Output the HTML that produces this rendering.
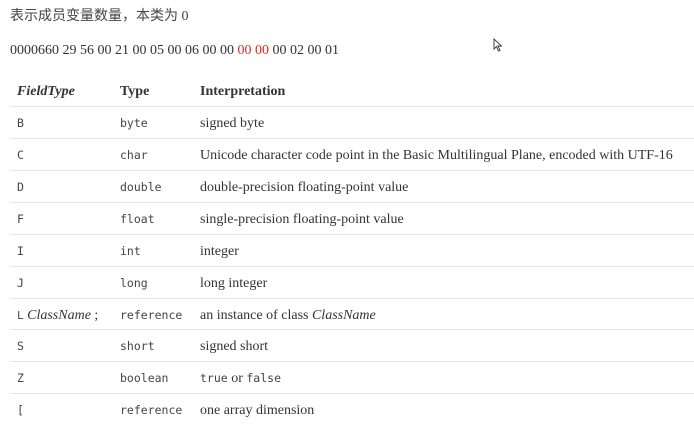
<!DOCTYPE html>
<html><head><meta charset="utf-8"><style>
body{margin:0;width:694px;height:432px;background:#fff;color:#333;font-family:"Liberation Serif","Noto Serif CJK SC",serif;position:relative;overflow:hidden}
.t{position:absolute;left:10px;top:5px;font-size:14px;font-family:"Liberation Serif","Noto Sans CJK SC",sans-serif;color:#444}
.h{position:absolute;left:10px;top:43px;font-size:14px;color:#333}
.r{color:#e0271e}
.row{position:absolute;left:10px;width:684px;height:32px;border-top:1px solid #e6e6e6;font-size:14px}
.row span{position:absolute;top:9px}
.c1{left:7px}.c2{left:110px}.c3{left:190px}
.m{font-family:"DejaVu Sans Mono","Liberation Mono",monospace;font-size:11.5px;color:#444;top:9px!important}
.hd{position:absolute;left:10px;top:84px;font-size:14px;font-weight:bold;width:684px}
.hd span{position:absolute}
</style></head><body>
<div class="t">表示成员变量数量，本类为 0</div>
<div class="h">0000660 29 56 00 21 00 05 00 06 00 00 <span class="r">00 00</span> 00 02 00 01</div>
<svg style="position:absolute;left:493px;top:38px" width="10" height="14" viewBox="0 0 10 14"><path d="M1 1 L1 11 L3.5 8.5 L5.5 13 L7 12.3 L5 8 L8.5 8 Z" fill="#fff" stroke="#333" stroke-width="0.9"/></svg>
<div class="hd"><span style="left:7px;font-style:italic">FieldType</span><span style="left:110px">Type</span><span style="left:190px">Interpretation</span></div>
<div class="row" style="top:106px"><span class="c1 m">B</span><span class="c2 m">byte</span><span class="c3">signed byte</span></div>
<div class="row" style="top:138px"><span class="c1 m">C</span><span class="c2 m">char</span><span class="c3">Unicode character code point in the Basic Multilingual Plane, encoded with UTF-16</span></div>
<div class="row" style="top:170px"><span class="c1 m">D</span><span class="c2 m">double</span><span class="c3">double-precision floating-point value</span></div>
<div class="row" style="top:202px"><span class="c1 m">F</span><span class="c2 m">float</span><span class="c3">single-precision floating-point value</span></div>
<div class="row" style="top:234px"><span class="c1 m">I</span><span class="c2 m">int</span><span class="c3">integer</span></div>
<div class="row" style="top:266px"><span class="c1 m">J</span><span class="c2 m">long</span><span class="c3">long integer</span></div>
<div class="row" style="top:298px"><span class="c1"><span class="m" style="position:static;font-size:11px">L</span> <i>ClassName</i> ;</span><span class="c2 m">reference</span><span class="c3">an instance of class <i>ClassName</i></span></div>
<div class="row" style="top:329px"><span class="c1 m">S</span><span class="c2 m">short</span><span class="c3">signed short</span></div>
<div class="row" style="top:361px"><span class="c1 m">Z</span><span class="c2 m">boolean</span><span class="c3"><span class="m" style="position:static">true</span> or <span class="m" style="position:static">false</span></span></div>
<div class="row" style="top:393px"><span class="c1 m">[</span><span class="c2 m">reference</span><span class="c3">one array dimension</span></div>
</body></html>
